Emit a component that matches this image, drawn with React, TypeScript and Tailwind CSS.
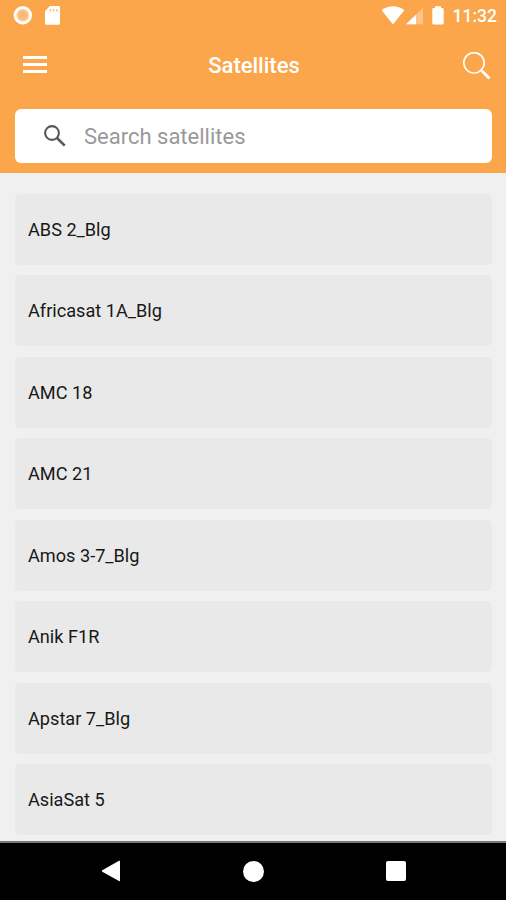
const satellites = [
	'ABS 2_Blg',
	'Africasat 1A_Blg',
	'AMC 18',
	'AMC 21',
	'Amos 3-7_Blg',
	'Anik F1R',
	'Apstar 7_Blg',
	'AsiaSat 5',
];

const StatusBar = () => (
	<div className="flex h-8 items-center justify-between pl-[13px] pr-[9px]">
		<div className="flex items-center gap-[12px]">
			<svg className="h-5 w-5" viewBox="0 0 20 20">
				<circle cx="9.8" cy="9.2" r="9.2" fill="#fff" />
				<circle cx="9.8" cy="9.2" r="6.4" fill="#fcd0a0" />
				<circle cx="9.8" cy="9.2" r="4.8" fill="#fbb974" />
			</svg>
			<svg className="h-5 w-4" viewBox="0 0 16 20">
				<path
					d="M5 0h8.5A1.5 1.5 0 0 1 15 1.5v15.8a1.5 1.5 0 0 1-1.5 1.5h-12A1.5 1.5 0 0 1 0 17.3V5z"
					fill="#fff"
				/>
				<path d="M5.5 3v2.5M8.7 3v2.5M11.9 3v2.5" stroke="#fbc084" strokeWidth="1.6" />
			</svg>
		</div>
		<div className="flex items-center">
			<svg className="h-5 w-[54px]" viewBox="0 0 54 20">
				<path d="M-.5 4.2C6.4-1.1 15.6-1.1 22.3 4.2L11 18.5z" fill="#fff" />
				<path d="M41 2v16.3H24z" fill="#fcc48b" />
				<path d="M34 8.7v9.6H24z" fill="#fff" />
			</svg>
			<svg className="-ml-[4px] h-5 w-3" viewBox="0 0 12 20">
				<path
					d="M3 .3h6v1.8h1.3A1.4 1.4 0 0 1 11.7 3.5v13.8a1.2 1.2 0 0 1-1.2 1.2h-9A1.2 1.2 0 0 1 .3 17.3V3.5a1.4 1.4 0 0 1 1.4-1.4H3z"
					fill="#fff"
				/>
			</svg>
			<span className="ml-[9px] pt-[2px] text-[17.5px] leading-none font-medium">11:32</span>
		</div>
	</div>
);

const Toolbar = () => (
	<div className="flex h-[68px] items-center justify-between pl-[23px] pr-[15px]">
		<button className="-mt-[3px] flex h-[17px] w-[24px] flex-col justify-between">
			<span className="h-[3px] w-full bg-white" />
			<span className="h-[3px] w-full bg-white" />
			<span className="h-[3px] w-full bg-white" />
		</button>
		<h1 className="pr-[2px] text-[22px] leading-none font-medium">Satellites</h1>
		<button>
			<svg className="h-7 w-7" viewBox="0 0 28 28" fill="none" stroke="#fff">
				<circle cx="11" cy="10.8" r="10.2" strokeWidth="1.6" />
				<path d="M18 18l2.2 2.2" strokeWidth="1.5" />
				<path d="M19 19l7.5 7.5" strokeWidth="2.8" />
			</svg>
		</button>
	</div>
);

const SearchBox = () => (
	<div className="mx-[15px] mt-[9px] flex h-[54px] w-[477px] items-center rounded-[6px] bg-white pl-[29px] pr-[14px]">
		<svg className="h-[22px] w-[22px] shrink-0" viewBox="0 0 22 22" fill="none" stroke="#585858">
			<circle cx="8" cy="8" r="6.9" strokeWidth="2.1" />
			<path d="M13 13l7.7 7.7" strokeWidth="2.6" />
		</svg>
		<input
			type="text"
			placeholder="Search satellites"
			className="ml-[18px] w-full bg-transparent text-[22px] text-black outline-none placeholder:text-[#999]"
		/>
	</div>
);

const NavBar = () => (
	<nav className="h-[59px] shrink-0 border-t-2 border-[#777] bg-black">
		<div className="flex h-[56px] items-center justify-between pl-[101px] pr-[100px]">
			<svg className="h-[22px] w-[20px]" viewBox="0 0 20 22" fill="#fff">
				<path d="M18 .8q1-.5 1 .6v19.2q0 1-1 .5L1.3 11.8q-1-.8 0-1.5z" />
			</svg>
			<span className="h-[21px] w-[21px] rounded-full bg-white" />
			<span className="h-[20px] w-[20px] rounded-[2px] bg-white" />
		</div>
	</nav>
);

export default function App() {
	return (
		<div className="flex h-[900px] w-[506px] flex-col overflow-hidden bg-[#f0f0f0] font-['Roboto',sans-serif]">
			<header className="h-[173px] shrink-0 bg-[#fba64a] text-white">
				<StatusBar />
				<Toolbar />
				<SearchBox />
			</header>
			<main className="min-h-0 flex-1 overflow-hidden px-[15px] pt-[20.5px]">
				<ul className="flex flex-col gap-[10.5px]">
					{satellites.map((name) => (
						<li
							key={name}
							className="flex h-[71px] w-[477px] items-center rounded-[5px] bg-[#e9e9e9] pt-px pl-[13px] text-[18.15px] text-[#181818]"
						>
							{name}
						</li>
					))}
				</ul>
			</main>
			<NavBar />
		</div>
	);
}
